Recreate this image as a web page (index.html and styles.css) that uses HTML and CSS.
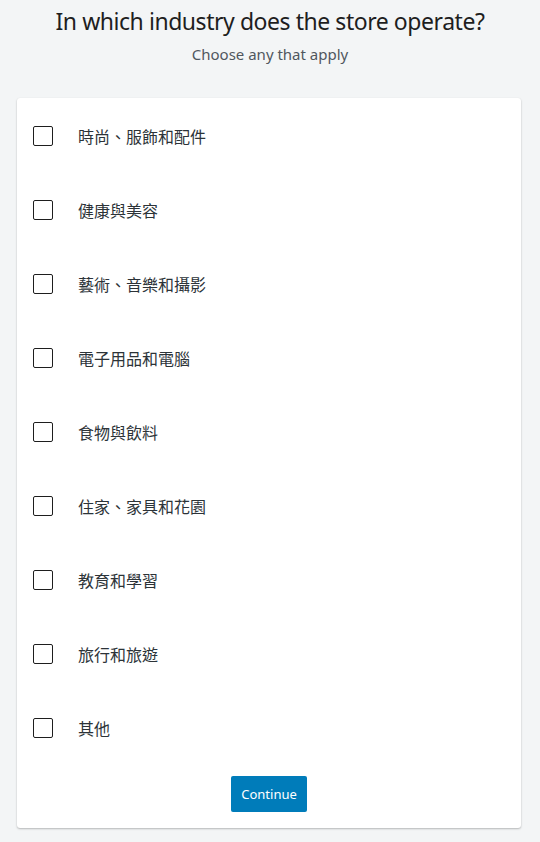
FILE: index.html
```html
<!DOCTYPE html>
<html lang="en">
<head>
<meta charset="utf-8">
<title>Industry</title>
<link rel="stylesheet" href="styles.css">
</head>
<body>
<div class="page">
  <h1 class="title">In which industry does the store operate?</h1>
  <p class="subtitle">Choose any that apply</p>
  <div class="card">
    <label class="row"><span class="box"></span><span class="label">時尚、服飾和配件</span></label>
    <label class="row"><span class="box"></span><span class="label">健康與美容</span></label>
    <label class="row"><span class="box"></span><span class="label">藝術、音樂和攝影</span></label>
    <label class="row"><span class="box"></span><span class="label">電子用品和電腦</span></label>
    <label class="row"><span class="box"></span><span class="label">食物與飲料</span></label>
    <label class="row"><span class="box"></span><span class="label">住家、家具和花園</span></label>
    <label class="row"><span class="box"></span><span class="label">教育和學習</span></label>
    <label class="row"><span class="box"></span><span class="label">旅行和旅遊</span></label>
    <label class="row"><span class="box"></span><span class="label">其他</span></label>
    <div class="actions"><button class="btn">Continue</button></div>
  </div>
</div>
</body>
</html>
```
FILE: styles.css
```css
html, body {
  margin: 0;
  padding: 0;
  background: #f3f5f6;
}
body {
  font-family: "Noto Sans", "Noto Sans CJK TC", sans-serif;
  color: #1e1e1e;
}
.page {
  width: 540px;
  height: 842px;
  overflow: hidden;
}
.title {
  margin: 0;
  padding-top: 5px;
  font-size: 23px;
  letter-spacing: -0.45px;
  font-weight: 400;
  line-height: 32px;
  text-align: center;
  color: #1e1e1e;
}
.subtitle {
  margin: 6px 0 0;
  font-size: 15px;
  line-height: 22px;
  text-align: center;
  color: #50575e;
}
.card {
  margin: 33px 19px 0 17px;
  background: #fff;
  border-radius: 3px;
  box-shadow: 0 1px 2px rgba(0,0,0,0.25), 0 0 1px rgba(0,0,0,0.06);
  padding: 1px 16px 16px;
}
.row {
  display: flex;
  align-items: center;
  height: 74px;
}
.box {
  box-sizing: border-box;
  width: 20px;
  height: 20px;
  border: 1.5px solid #1e1e1e;
  border-radius: 2px;
}
.label {
  margin-left: 25px;
  font-family: "Noto Sans CJK TC", sans-serif;
  font-size: 16px;
  color: #2c3338;
}
.actions {
  display: flex;
  justify-content: center;
  margin-top: 11px;
}
.btn {
  height: 36px;
  padding: 0 10px;
  border: none;
  border-radius: 2px;
  background: #007cba;
  color: #fff;
  font-family: "Noto Sans", sans-serif;
  font-size: 13px;
}
```
